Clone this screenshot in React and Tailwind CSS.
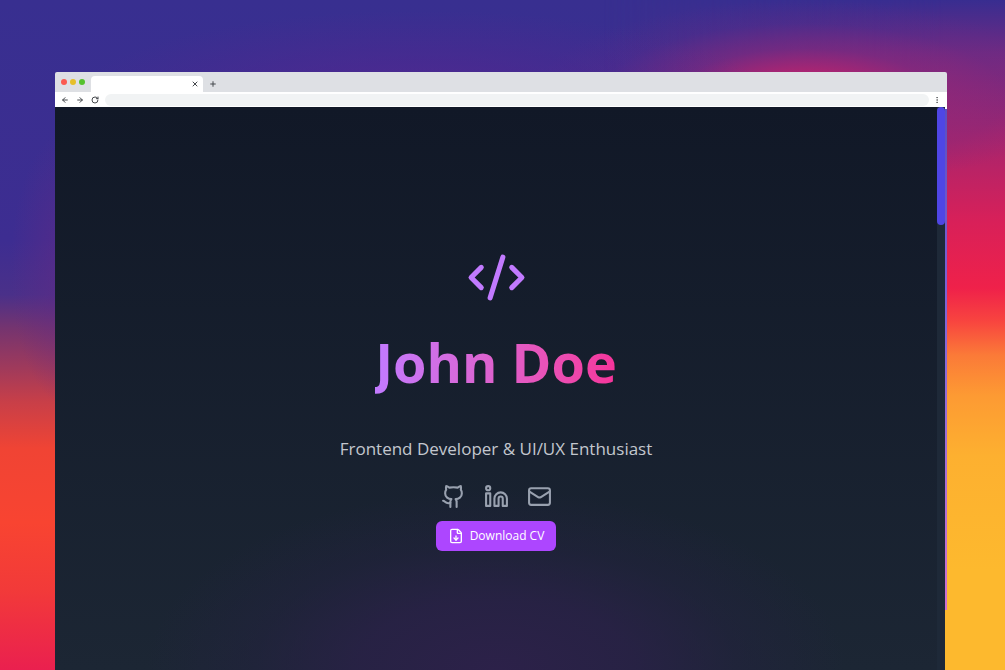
import React from 'react'
import { ArrowLeft, ArrowRight, CodeXml, EllipsisVertical, FileDown, Github, Linkedin, Mail, Plus, RotateCw, X } from 'lucide-react'

const socials = [
  { icon: Github, label: 'GitHub', href: '#github' },
  { icon: Linkedin, label: 'LinkedIn', href: '#linkedin' },
  { icon: Mail, label: 'Email', href: '#email' }
]

const Backdrop = () => (
  <div className="absolute inset-0 overflow-hidden bg-[linear-gradient(to_bottom,#382f90_0%,#3d2d91_36%,#4a3089_44%,#75346f_49%,#a03a5b_55%,#c83f48_60%,#f04434_67%,#f84431_78%,#f23a39_88%,#ea204f_100%)]">
    <div className="absolute inset-0 bg-[linear-gradient(to_bottom,#382d90_0%,#702a82_8%,#a5256e_20%,#d82059_33%,#ef214a_43%,#f8453f_48%,#fb7a38_53%,#fd9a33_59%,#fdb030_68%,#fdb92e_85%,#fdb92e_100%)] [mask-image:linear-gradient(to_right,transparent_60%,black_94%)]" />
    <div className="absolute inset-0 bg-[radial-gradient(ellipse_270px_94px_at_80%_14%,#d0206a_0%,#b8246fdd_22%,#90287a80_48%,#6a2a8530_75%,transparent_100%)]" />
    <div className="absolute inset-0 bg-[radial-gradient(ellipse_350px_90px_at_42%_15%,#5a2590_0%,transparent_100%)] opacity-70" />
    <div className="absolute inset-0 bg-[radial-gradient(ellipse_60px_140px_at_7%_40%,#602a86_0%,transparent_100%)] opacity-70" />
  </div>
)

const BrowserBar = () => (
  <header className="overflow-hidden rounded-t-xs bg-[#dee0e4]">
    <div className="flex h-5 items-end">
      <div className="flex h-full w-9 items-center justify-end gap-[3px] pr-1.5">
        <span className="h-1.5 w-1.5 rounded-full bg-[#fb5a50]" />
        <span className="h-1.5 w-1.5 rounded-full bg-[#e6bf29]" />
        <span className="h-1.5 w-1.5 rounded-full bg-[#55c22d]" />
      </div>
      <div className="flex h-4 w-28 items-center justify-end rounded-t-sm bg-white pr-1">
        <button aria-label="Close tab" className="text-[#45484c]">
          <X className="block h-2 w-2" strokeWidth={3} />
        </button>
      </div>
      <button aria-label="New tab" className="flex h-4 items-center px-1.5 text-[#45484c]">
        <Plus className="h-2 w-2" strokeWidth={3} />
      </button>
    </div>
    <div className="flex h-[15px] items-center bg-white px-1.5 text-[#45484c]">
      <div className="flex items-center gap-[7px]">
        <button aria-label="Back"><ArrowLeft className="block h-2 w-2" strokeWidth={3} /></button>
        <button aria-label="Forward"><ArrowRight className="block h-2 w-2" strokeWidth={3} /></button>
        <button aria-label="Reload"><RotateCw className="block h-2 w-2" strokeWidth={3} /></button>
      </div>
      <input aria-label="Address" className="ml-1.5 h-3 min-w-0 flex-1 rounded-full bg-[#f1f3f4] px-2 text-[8px] outline-none" />
      <button aria-label="Menu" className="ml-1"><EllipsisVertical className="block h-2 w-2" /></button>
    </div>
  </header>
)

const Hero = () => (
  <main className="flex flex-1 flex-col items-center bg-[radial-gradient(ellipse_350px_180px_at_50%_100%,#2c2149_0%,#2a2148cc_40%,#25214266_70%,transparent_100%),linear-gradient(to_bottom,#111827,#1c2634)] px-4 pt-[140px] pb-28">
    <CodeXml className="h-[61px] w-[61px] text-[#c27aff]" />
    <h1 className="mt-[19px] bg-linear-to-r from-[#c27aff] to-[#f6339a] bg-clip-text text-[54px] leading-[70px] font-bold text-transparent">
      John Doe
    </h1>
    <p className="mt-[38px] text-center text-[17px] leading-7 text-[#c3c7ce]">Frontend Developer &amp; UI/UX Enthusiast</p>
    <nav className="mt-[21px] flex gap-[18px]">
      {socials.map((item) => (
        <a key={item.label} href={item.href} aria-label={item.label} className="text-[#99a1af] hover:text-white">
          <item.icon className="h-[25px] w-[25px]" />
        </a>
      ))}
    </nav>
    <button className="mt-3 flex h-[30px] items-center gap-1.5 rounded-md bg-[#ad46ff] px-3 text-xs font-medium text-white">
      <FileDown className="h-4 w-4" />
      <span>Download CV</span>
    </button>
  </main>
)

const App = () => {
  return (
    <div className="relative flex min-h-screen flex-col font-['Open_Sans','Noto_Sans',sans-serif]">
      <Backdrop />
      <div className="relative flex flex-1 flex-col pt-[72px] pr-[58px] pl-[55px]">
        <BrowserBar />
        <div className="flex flex-1">
          <Hero />
          {/* Scrollbar */}
          <div className="w-2 bg-[#1e2938]">
            <div className="h-[118px] rounded-full bg-[#4f46e5]" />
          </div>
          <div className="h-[503px] w-0.5 border-t-2 border-white bg-linear-to-b from-[#5a4fc0] via-[#8a68d8] to-[#d070d0]" />
        </div>
      </div>
    </div>
  )
}

export default App
